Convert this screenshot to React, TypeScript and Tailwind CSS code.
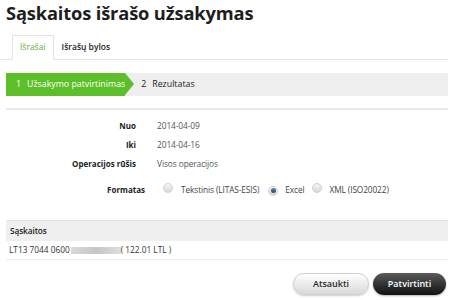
import React from "react";

function Radio({ checked }: { checked?: boolean }) {
  return (
    <span className="inline-flex h-[10px] w-[10px] items-center justify-center rounded-full border border-[#cfcfcf] bg-gradient-to-b from-[#f6f6f6] to-[#d8d8d8]">
      {checked && <span className="h-[5px] w-[5px] rounded-full bg-gradient-to-b from-[#5a89b0] to-[#23496b]" />}
    </span>
  );
}

export default function App() {
  const rows = [
    { label: "Nuo", value: "2014-04-09" },
    { label: "Iki", value: "2014-04-16" },
    { label: "Operacijos rūšis", value: "Visos operacijos" },
  ];

  return (
    <div className="h-[300px] w-[454px] bg-white font-['Open_Sans',sans-serif] text-[#333]">
      <h1 className="h-[25px] pl-[6px] text-[18.3px] font-bold leading-[25px] tracking-[-0.15px] text-[#1e1e1e]">
        Sąskaitos išrašo užsakymas
      </h1>

      {/* Tabs */}
      <div className="mr-[6px] mt-[10px] flex h-[25px] border-b border-[#e3e3e3] pl-[12px] text-[8.5px]">
        <div className="-mb-px flex h-[25px] items-center border border-[#e3e3e3] border-b-white bg-white px-[7px] text-[#63ad34]">
          Išrašai
        </div>
        <div className="flex h-[24px] items-center pl-[8px] font-semibold text-[#222]">Išrašų bylos</div>
      </div>

      {/* Steps */}
      <div className="mx-[6px] mt-[13px] flex h-[23px] items-center bg-[#efefef] text-[8.8px]">
        <div className="relative flex h-full items-center bg-[#5cbf2a] pl-[10px] text-white">
          <span className="mr-[6px]">1</span>Užsakymo patvirtinimas
          <span className="absolute left-full top-0 h-0 w-0 border-y-[11.5px] border-l-[9px] border-y-transparent border-l-[#5cbf2a]" />
        </div>
        <div className="pl-[16px] text-[#222]">
          <span className="mr-[6px]">2</span>Rezultatas
        </div>
      </div>

      <div className="mx-[6px] mt-[12px] border-t-2 border-[#e9e9e9]" />

      {/* Form */}
      <div className="mt-[6px] grid grid-cols-[136px_1fr] gap-x-[21px] text-[8px] leading-[19px]">
        {rows.map((r) => (
          <React.Fragment key={r.label}>
            <div className="text-right font-bold text-[#222]">{r.label}</div>
            <div className="text-[8.4px] tracking-[-0.1px] text-[#555]">{r.value}</div>
          </React.Fragment>
        ))}
      </div>
      <div className="mt-[7px] grid grid-cols-[145px_1fr] gap-x-[18px] text-[8px] leading-[19px]">
        <div className="text-right font-bold text-[#222]">Formatas</div>
        <div className="flex items-center text-[8.3px] tracking-[-0.1px] text-[#444]">
          <span className="mr-[8px]"><Radio /></span>Tekstinis (LITAS-ESIS)
          <span className="ml-[9px] mr-[7px]"><Radio checked /></span>Excel
          <span className="ml-[8px] mr-[7px]"><Radio /></span>XML (ISO20022)
        </div>
      </div>

      {/* Accounts */}
      <div className="mx-[6px] mt-[21px] text-[8.3px]">
        <div className="flex h-[21px] items-center border-t border-[#e3e3e3] bg-[#efefef] pl-[4px] font-semibold tracking-[-0.1px] text-[#222]">
          Sąskaitos
        </div>
        <div className="flex h-[19px] items-center border-b border-[#ececec] pl-[3px] text-[#333]">
          LT13 7044 0600
          <span className="ml-[1px] h-[7px] w-[50px] bg-gradient-to-r from-[#dadada] via-[#c6c6c6] to-[#dedede]" />
          ( 122.01 LTL )
        </div>
      </div>

      {/* Buttons */}
      <div className="mr-[8px] mt-[13px] flex justify-end gap-[4px] text-[9px] font-semibold">
        <button className="h-[22px] w-[76px] rounded-full border border-[#d0d0d0] bg-gradient-to-b from-white to-[#d9d9d9] text-[#2a2a2a] shadow-[0_1px_2px_rgba(0,0,0,0.2)]">
          Atsaukti
        </button>
        <button className="h-[22px] w-[73px] rounded-full bg-gradient-to-b from-[#5c5c5c] to-[#121212] text-white shadow-[0_1px_2px_rgba(0,0,0,0.3)]">
          Patvirtinti
        </button>
      </div>
    </div>
  );
}
